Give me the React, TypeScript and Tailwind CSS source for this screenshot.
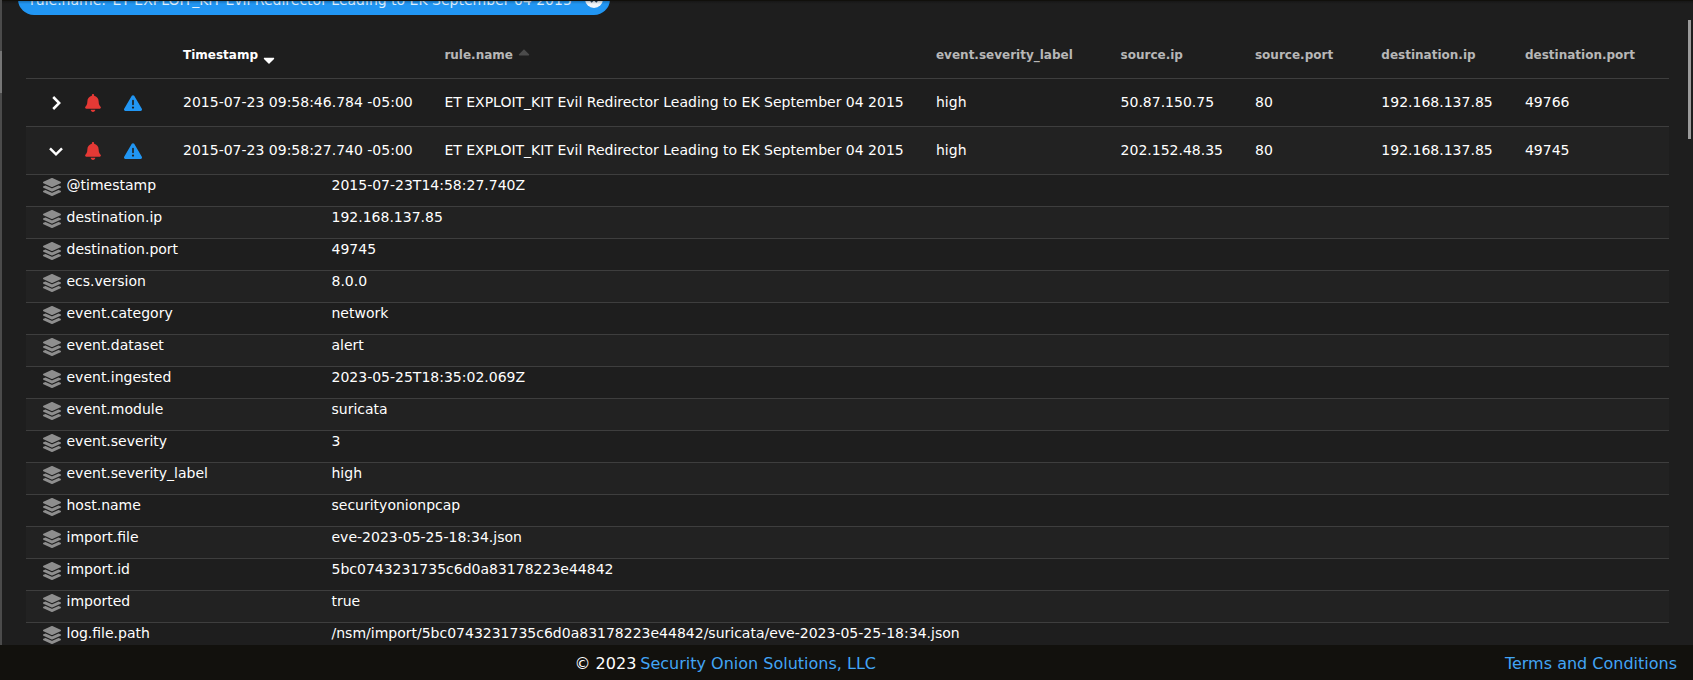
import type { ReactNode } from "react";
import { FaBell, FaLayerGroup, FaCaretDown, FaCaretUp } from "react-icons/fa";
import { FaTriangleExclamation } from "react-icons/fa6";

const alerts = [
  { open: false, time: "2015-07-23 09:58:46.784 -05:00", src: "50.87.150.75", port: "49766" },
  { open: true, time: "2015-07-23 09:58:27.740 -05:00", src: "202.152.48.35", port: "49745" },
];

const fields: [string, string][] = [
  ["@timestamp", "2015-07-23T14:58:27.740Z"],
  ["destination.ip", "192.168.137.85"],
  ["destination.port", "49745"],
  ["ecs.version", "8.0.0"],
  ["event.category", "network"],
  ["event.dataset", "alert"],
  ["event.ingested", "2023-05-25T18:35:02.069Z"],
  ["event.module", "suricata"],
  ["event.severity", "3"],
  ["event.severity_label", "high"],
  ["host.name", "securityonionpcap"],
  ["import.file", "eve-2023-05-25-18:34.json"],
  ["import.id", "5bc0743231735c6d0a83178223e44842"],
  ["imported", "true"],
  ["log.file.path", "/nsm/import/5bc0743231735c6d0a83178223e44842/suricata/eve-2023-05-25-18:34.json"],
];

const ruleName = "ET EXPLOIT_KIT Evil Redirector Leading to EK September 04 2015";

function Chevron({ open }: { open: boolean }) {
  return (
    <svg viewBox="0 0 18 18" className="size-[18px]" fill="none" stroke="currentColor" strokeWidth="2.5">
      <path d={open ? "M3 6.3l6 6 6-6" : "M6.2 3l6 6-6 6"} />
    </svg>
  );
}

function GridRow({ className, children }: { className: string; children: ReactNode }) {
  return (
    <div
      className={`grid grid-cols-[157px_261.4px_491.6px_184.6px_134.4px_126.4px_143.6px_144px] items-center border-b border-[#3e3e3e] ${className}`}
    >
      {children}
    </div>
  );
}

export default function App() {
  return (
    <div className="flex h-[680px] w-full flex-col overflow-hidden bg-[#1e1e1e] font-['DejaVu_Sans',sans-serif] text-white">
      <div className="flex min-h-0 flex-1">
        <div className="flex w-[2px] shrink-0 flex-col bg-[#4b4b4b]">
          <div className="mt-[51px] h-[42px] bg-[#767676]" />
        </div>
        <div className="relative flex min-w-0 flex-1 flex-col overflow-hidden">
          <div className="flex h-[15px] shrink-0 items-end overflow-hidden pl-4">
            <div className="flex h-8 w-[592px] shrink-0 items-center justify-between rounded-full bg-[#2196f3] pt-[2px] pr-[7px] pl-3 text-[14px] text-white/85">
              <span className="whitespace-pre">
                rule.name: <span className="ml-[2px]">{ruleName}</span>
              </span>
              <svg viewBox="0 0 18 18" className="-mt-[2px] size-[18px]">
                <circle cx="9" cy="9" r="9" fill="#f0f5fa" />
                <path d="M6 6l6 6M12 6l-6 6" stroke="#2d4d6b" strokeWidth="2" />
              </svg>
            </div>
          </div>
          <div className="ml-[24px] flex w-[1643px] flex-col">
            <GridRow className="h-[64px] pt-[16px] text-[12px] font-bold text-[#b7b7b7]">
              <span />
              <span className="flex items-center text-white">
                Timestamp
                <FaCaretDown className="relative top-[5px] ml-[2px] size-[18px]" />
              </span>
              <span className="flex items-center">
                rule.name
                <FaCaretUp className="relative -top-[3px] ml-[2px] size-[18px] text-[#4b4b4b]" />
              </span>
              <span>event.severity_label</span>
              <span>source.ip</span>
              <span>source.port</span>
              <span>destination.ip</span>
              <span>destination.port</span>
            </GridRow>
            {alerts.map((a) => (
              <GridRow key={a.time} className={`h-[48px] text-[14px] ${a.open ? "bg-[#222222]" : ""}`}>
                <span className="flex items-center pt-px pl-[21px]">
                  <Chevron open={a.open} />
                  <FaBell className="ml-[18.5px] size-[18px] text-[#e53935]" />
                  <FaTriangleExclamation className="ml-[22px] size-[18px] text-[#2196f3]" />
                </span>
                <span>{a.time}</span>
                <span>{ruleName}</span>
                <span>high</span>
                <span>{a.src}</span>
                <span>80</span>
                <span>192.168.137.85</span>
                <span>{a.port}</span>
              </GridRow>
            ))}
            {fields.map(([name, value], i) => (
              <div
                key={name}
                className={`flex h-[32px] shrink-0 border-b border-[#3e3e3e] text-[14px] leading-[21px] ${i % 2 ? "bg-[#222222]" : ""}`}
              >
                <div className="flex w-[305.5px] pl-[17px]">
                  <FaLayerGroup className="mt-[3px] mr-[5.5px] size-[18px] text-[#8e8e8e]" />
                  {name}
                </div>
                <div>{value}</div>
              </div>
            ))}
          </div>
          <div className="absolute inset-x-0 top-0 h-px bg-[#11100c]" />
          <div className="absolute inset-x-0 top-px h-[3px] bg-linear-to-b from-black/25 to-transparent" />
          <div className="absolute top-[20px] right-[2px] h-[119px] w-[3px] bg-[#9b9b9b]" />
        </div>
      </div>
      <footer className="grid h-[35px] shrink-0 grid-cols-[574.5px_1fr_auto] items-center bg-[#12110d] pt-[2px] pr-[16px] text-[16px]">
        <span />
        <span className="flex gap-[4px]">
          <span>© 2023</span>
          <a className="text-[#42a5f5]">Security Onion Solutions, LLC</a>
        </span>
        <a className="text-[#42a5f5]">Terms and Conditions</a>
      </footer>
    </div>
  );
}
